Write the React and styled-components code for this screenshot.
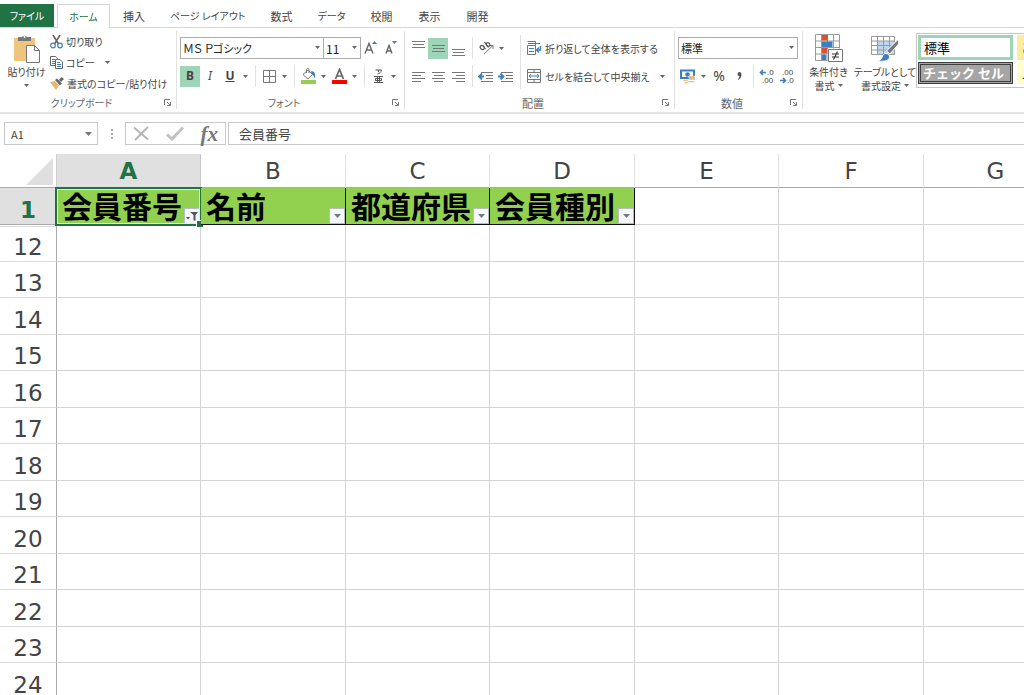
import React, { useState } from "react";
import styled, { createGlobalStyle, css } from "styled-components";

const GlobalStyle = createGlobalStyle`
  * {
    box-sizing: border-box;
  }
  body {
    margin: 0;
    background: #fff;
  }
  body,
  button,
  input,
  select {
    font-family: "Noto Sans CJK JP", "Noto Sans", sans-serif;
    font-size: 12px;
    font-feature-settings: "palt";
    color: #444;
  }
`;

// ---------------- layout ----------------
const Page = styled.div`
  display: flex;
  flex-direction: column;
  height: 100vh;
  overflow: hidden;
`;
const TabBar = styled.nav`
  display: flex;
  align-items: flex-end;
  height: 28px;
  flex-shrink: 0;
  border-bottom: 1px solid #d8d8d8;
`;
const Tab = styled.button`
  height: 23px;
  padding: 0 ${(props) => (props.$kana ? 12 : 13)}px;
  border: 0;
  background: none;
  font-size: ${(props) => (props.$kana ? 10 : 11)}px;
  line-height: 22px;
  white-space: nowrap;
  ${(props) =>
    props.$file &&
    css`
      width: 54px;
      padding: 0;
      margin-right: 3px;
      background: #217346;
      color: #fff;
    `}
  ${(props) =>
    props.$active &&
    css`
      width: 53px;
      height: 24px;
      padding: 0;
      margin-bottom: -1px;
      border: 1px solid #d4d4d4;
      border-bottom: 0;
      background: #fff;
      color: #217346;
    `}
`;
const Ribbon = styled.div`
  display: flex;
  flex-shrink: 0;
  height: 86px;
  padding-top: 3px;
  border-bottom: 2px solid #e4e4e4;
  overflow: hidden;
`;
const Group = styled.section`
  display: flex;
  flex-direction: column;
  flex: 0 0 ${(props) => props.$width}px;
  min-width: 0;
  height: 78px;
  padding-left: 3px;
  border-right: 1px solid #e1e1e1;
`;
const GroupBody = styled.div`
  display: flex;
  flex: 1;
`;
const GroupFooter = styled.div`
  display: grid;
  grid-template-columns: 12px 1fr 12px;
  align-items: center;
  height: 12px;
  font-size: ${(props) => (props.$kana ? 10 : 11)}px;
  line-height: 12px;
  color: #666;
  text-align: center;
`;
const FooterText = styled.span`
  padding-right: 16px;
`;
const Launcher = styled.button`
  display: flex;
  grid-column: 3;
  width: 9px;
  height: 8px;
  padding: 0;
  border: 0;
  background: none;
`;
const Rows = styled.div`
  display: flex;
  flex-direction: column;
  gap: 6px;
  padding-top: 6px;
`;
const Row = styled.div`
  display: flex;
  align-items: center;
  height: 22px;
`;
const Divider = styled.span`
  align-self: stretch;
  flex-shrink: 0;
  width: 1px;
  margin: 0 3px 0 4px;
  background: #e1e1e1;
`;
const TallDivider = styled(Divider)`
  margin: 4px 6px 8px 4px;
`;

// ---------------- controls ----------------
const ToolButton = styled.button`
  display: flex;
  align-items: center;
  justify-content: center;
  flex-shrink: 0;
  width: 20px;
  height: 21px;
  padding: 0;
  border: 0;
  background: ${(props) => (props.$on ? "#9fd5b7" : "none")};
  font-family: "Noto Sans", sans-serif;
  font-size: ${(props) => props.$size || 12}px;
  line-height: 16px;
`;
const ArrowButton = styled(ToolButton)`
  width: 11px;
`;
const BigButton = styled.button`
  display: flex;
  flex-direction: column;
  align-items: center;
  flex: 0 0 ${(props) => props.$width}px;
  min-width: 0;
  padding: 3px 0 0;
  border: 0;
  background: none;
  font-size: 10px;
  line-height: 13px;
  white-space: nowrap;
  svg {
    flex-shrink: 0;
  }
`;
const BigIcon = styled.span`
  display: flex;
  height: 31px;
`;
const ArrowLine = styled.span`
  display: flex;
  align-items: center;
  gap: 3px;
  height: 14px;
`;
const MenuList = styled.div`
  display: flex;
  flex-direction: column;
`;
const TextButton = styled.button`
  display: flex;
  align-items: center;
  gap: 3px;
  height: ${(props) => props.$height || 21}px;
  padding: 0;
  border: 0;
  background: none;
  font-size: 10px;
  white-space: nowrap;
  svg {
    flex-shrink: 0;
  }
`;
const Spacer = styled.span`
  width: 4px;
`;
const SelectBox = styled.span`
  position: relative;
  width: ${(props) => props.$width}px;
  height: 22px;
  & + & {
    margin-left: -1px;
  }
  select {
    width: 100%;
    height: 100%;
    padding: 0 12px 0 2px;
    border: 1px solid #ababab;
    border-radius: 0;
    background: #fff;
    color: #222;
    font-size: ${(props) => props.$size || 11}px;
    appearance: none;
  }
  svg {
    position: absolute;
    right: 4px;
    top: 9px;
    pointer-events: none;
  }
`;
const Gallery = styled.div`
  display: grid;
  grid-template-columns: 95px 95px;
  grid-template-rows: 25px 22px;
  gap: 2px 4px;
  align-self: flex-start;
  height: 55px;
  margin-top: 2px;
  padding: 1px;
  border: 1px solid #c6c6c6;
`;
const StyleSwatch = styled.button`
  padding: 0 3px;
  border: 1px solid ${(props) => props.$bg};
  background: ${(props) => props.$bg};
  color: ${(props) => props.$fg};
  font-size: 13px;
  line-height: 14px;
  text-align: left;
  white-space: nowrap;
  font-feature-settings: normal;
  ${(props) =>
    props.$selected &&
    css`
      border: 3px solid #9fd5b7;
    `}
  ${(props) =>
    props.$double &&
    css`
      padding: 0 2px;
      border: 3px double #3f3f3f;
      font-weight: 700;
    `}
`;

// ---------------- formula bar ----------------
const FormulaBar = styled.div`
  display: flex;
  flex-shrink: 0;
  height: 40px;
  padding: 8px 0 9px 4px;
`;
const NameBox = styled.div`
  display: flex;
  align-items: center;
  width: 94px;
  height: 23px;
  border: 1px solid #c9c9c9;
  input {
    flex: 1;
    min-width: 0;
    padding: 0 6px;
    border: 0;
    font-size: 11px;
    outline: none;
  }
  button {
    display: flex;
    padding: 0 5px;
    border: 0;
    background: none;
  }
`;
const Dots = styled.span`
  display: flex;
  align-items: center;
  justify-content: center;
  width: 27px;
`;
const EntryButtons = styled.div`
  display: flex;
  align-items: center;
  justify-content: space-between;
  width: 101px;
  height: 23px;
  padding: 0 7px;
  border: 1px solid #c9c9c9;
  button {
    display: flex;
    padding: 0;
    border: 0;
    background: none;
  }
`;
const FxText = styled.span`
  font-family: "Liberation Serif", serif;
  font-size: 21px;
  font-style: italic;
  font-weight: 700;
  line-height: 20px;
  color: #777;
`;
const FormulaInput = styled.input`
  flex: 1;
  min-width: 0;
  height: 23px;
  margin-left: 2px;
  padding: 0 10px;
  border: 1px solid #c9c9c9;
  border-right: 0;
  font-size: 13px;
  font-feature-settings: normal;
  outline: none;
`;

// ---------------- sheet ----------------
const SheetArea = styled.main`
  flex: 1;
  min-height: 0;
  overflow: hidden;
`;
const Sheet = styled.table`
  width: max-content;
  table-layout: fixed;
  border-collapse: separate;
  border-spacing: 0;
  font-family: "DejaVu Sans", sans-serif;
  th,
  td {
    padding: 0;
  }
`;
const HeadRow = styled.tr`
  height: 34px;
`;
const BodyRow = styled.tr`
  height: 36px;
  &:nth-child(odd),
  &:nth-child(2) {
    height: 37px;
  }
`;
const Col = styled.col`
  width: ${(props) => props.$width}px;
`;
const Corner = styled.th`
  border-right: 1px solid #d0d0d0;
  border-bottom: 1px solid #ababab;
  svg {
    display: block;
    margin: 2px 3px 0 auto;
  }
`;
const ColHead = styled.th`
  border-right: 1px solid ${(props) => (props.$on ? "#c6c6c6" : "#e2e2e2")};
  border-bottom: 1px solid #ababab;
  background: ${(props) => (props.$on ? "#e0e0e0" : "#fff")};
  color: ${(props) => (props.$on ? "#217346" : "#444")};
  font-size: 23px;
  font-weight: ${(props) => (props.$on ? 700 : 400)};
  line-height: 32px;
`;
const RowHead = styled.th`
  border-right: 1px solid #ababab;
  border-bottom: 1px solid ${(props) => (props.$on ? "#ababab" : "#d9d9d9")};
  background: ${(props) => (props.$on ? "#e0e0e0" : "#fff")};
  color: ${(props) => (props.$on ? "#217346" : "#444")};
  font-size: 23px;
  font-weight: ${(props) => (props.$on ? 700 : 400)};
  line-height: 28px;
  vertical-align: bottom;
  ${(props) =>
    props.$afterHidden &&
    css`
      box-shadow: inset 0 1px 0 #fff, inset 0 2px 0 #d9d9d9;
    `}
`;
const Cell = styled.td`
  border-right: 1px solid #d4d4d4;
  border-bottom: 1px solid #d4d4d4;
`;
const TitleCell = styled.td`
  position: relative;
  border-right: 1px solid #111;
  border-bottom: 1px solid #111;
  background: #92d050;
  color: #000;
  font-family: "Noto Sans CJK JP", sans-serif;
  font-size: 30px;
  font-weight: 700;
  font-feature-settings: normal;
`;
const TitleInner = styled.div`
  display: flex;
  align-items: flex-end;
  justify-content: space-between;
  height: 36px;
  padding-left: 5px;
  line-height: 38px;
  white-space: nowrap;
`;
const FilterButton = styled.button`
  display: flex;
  align-items: center;
  justify-content: center;
  width: 16px;
  height: 16px;
  padding: 0;
  border: 1px solid #b8bcc4;
  background: #f6f7fb;
`;
const Selection = styled.span`
  position: absolute;
  inset: -1px -2px -2px -2px;
  border: 2px solid #217346;
  box-shadow: inset 0 0 0 1px #e4f3d3;
  pointer-events: none;
  &::after {
    content: "";
    position: absolute;
    right: -3px;
    bottom: -3px;
    width: 6px;
    height: 6px;
    border: 1px solid #fff;
    border-width: 1px 0 0 1px;
    background: #217346;
  }
`;

// ---------------- icons ----------------
const Caret = ({ color = "#666" }) => (
  <svg width="5" height="3" viewBox="0 0 5 3">
    <path d="M0 0h5L2.5 3z" fill={color} />
  </svg>
);
const WideCaret = () => (
  <svg width="7" height="4" viewBox="0 0 7 4">
    <path d="M0 0h7L3.500 4z" fill="#777" />
  </svg>
);
const LauncherIcon = () => (
  <svg width="8" height="8" viewBox="0 0 8 8" fill="none" stroke="#777">
    <path d="M.5 6V.5H6M3 3l3 3M6.500 3v3.500H3" />
  </svg>
);
const PasteIcon = () => (
  <svg width="28" height="29" viewBox="0 0 28 29">
    <path d="M1 4h21v23H1z" fill="#edc57f" />
    <path d="M5 7V3h4a3 3 0 0 1 5 0h4v4z" fill="#777" />
    <circle cx="11.500" cy="3" r="1" fill="#fff" />
    <path d="M13.500 11.500h8l5 5v12h-13z" fill="#fff" stroke="#777" />
    <path d="M21.500 11.500v5h5" fill="none" stroke="#777" />
  </svg>
);
const CutIcon = () => (
  <svg width="13" height="14" viewBox="0 0 13 14" fill="none">
    <path d="M3 0l5.500 9M10 0L4.500 9" stroke="#666" strokeWidth="1.600" />
    <circle cx="3" cy="10.500" r="2.300" stroke="#3d7ebf" strokeWidth="1.200" />
    <circle cx="10" cy="10.500" r="2.300" stroke="#3d7ebf" strokeWidth="1.200" />
  </svg>
);
const CopyIcon = () => (
  <svg width="13" height="13" viewBox="0 0 13 13" fill="#fff" stroke="#666">
    <path d="M.5.5h5l2 2v7h-7z" />
    <path d="M2 3.500h3M2 5.500h3M2 7.500h3" stroke="#3d7ebf" />
    <path d="M5.500 3.500h4.500l2.500 2.500v6.500h-7z" />
    <path d="M7 6.500h3M7 8.500h4M7 10.500h4" stroke="#3d7ebf" />
  </svg>
);
const BrushIcon = () => (
  <svg width="14" height="13" viewBox="0 0 14 13">
    <path d="M0 5l5-1 4 4.500L6 13C4 10 2 8 0 5z" fill="#edb56b" />
    <path d="M5 3l2-1.500 5 5L10 8.500z" fill="#666" />
    <path d="M9 3l2.500-3L14 2l-3 3z" fill="#666" />
  </svg>
);
const GrowIcon = ({ shrink }) => (
  <svg width="14" height="16" viewBox="0 0 14 16">
    <path
      d={shrink ? "M2 13.500L5 5.500l3 8M3 11h4" : "M1 13.500L5 3.500l4 10M2.600 10h4.800"}
      fill="none"
      stroke="#666"
      strokeWidth="1.400"
    />
    <path d={shrink ? "M8 1h5l-2.500 3z" : "M8 4h5l-2.500-3z"} fill="#3d7ebf" />
  </svg>
);
const BorderIcon = () => (
  <svg width="13" height="13" viewBox="0 0 13 13" fill="none" stroke="#777">
    <path d="M.5.5h12v12H.5zM6.500 1v11M1 6.500h11" />
  </svg>
);
const FillIcon = () => (
  <svg width="15" height="16" viewBox="0 0 15 16">
    <path d="M2 6.500L7 2l4.500 4.500L7 11z" fill="#fff" stroke="#777" />
    <path d="M5.500 5V1.500c0-1.500 2.500-1.500 2.500 0V5" fill="none" stroke="#777" />
    <path d="M10 3.500c3-1 5 2 4 7-1-2-1.500-3.500-3-4z" fill="#3d7ebf" />
    <path d="M0 12h15v4H0z" fill="#92d050" />
  </svg>
);
const FontColorIcon = () => (
  <svg width="15" height="16" viewBox="0 0 15 16">
    <path d="M3.500 11l4-9.500 4 9.500M5 8h5" fill="none" stroke="#666" strokeWidth="1.700" />
    <path d="M0 12h15v4H0z" fill="#f00" />
  </svg>
);
const RubyIcon = () => (
  <svg width="9" height="15" viewBox="0 0 9 15" fill="none" stroke="#555">
    <path d="M1.500 1h6c0 2-2 3.500-4 4M4.500 1v2M0 7.500h9M1.500 9.500h6v2h-6zM3.500 7.500v6M5.500 7.500v6M0 13.500h9" />
  </svg>
);
const LinesIcon = ({ lines, accent }) => (
  <svg width="16" height="17" viewBox="0 0 16 17" fill="none">
    {lines.map(([x, y, w]) => (
      <path key={y} d={`M${x} ${y + 0.5}h${w}`} stroke="#777" />
    ))}
    {accent === "out" && (
      <path d="M6 8.500H1M4 5.500l-3 3 3 3" stroke="#3d7ebf" strokeWidth="1.800" />
    )}
    {accent === "in" && (
      <path d="M0 8.500h5M2.500 5.500l3 3-3 3" stroke="#3d7ebf" strokeWidth="1.800" />
    )}
  </svg>
);
const OrientationIcon = () => (
  <svg width="15" height="14" viewBox="0 0 15 14" fill="none" stroke="#555">
    <path d="M5 13L14 4.500M14 8V4.500h-3.500" stroke="#777" />
    <ellipse cx="3.200" cy="6.500" rx="1.800" ry="2.200" transform="rotate(-40 3.200 6.500)" strokeWidth="1.200" />
    <path d="M3.500 4l3 4M5.500 1l4 5.500" strokeWidth="1.200" />
    <ellipse cx="9" cy="3.500" rx="1.700" ry="2" transform="rotate(-40 9 3.500)" strokeWidth="1.200" />
  </svg>
);
const WrapIcon = () => (
  <svg width="15" height="14" viewBox="0 0 15 14" fill="none">
    <path d="M.5 4.500h8v9h-8zM.5.500h8v4" stroke="#777" />
    <path d="M1 2.500h12M2 7.500h5M2 10.500h5" stroke="#3d7ebf" />
    <path d="M13.500 5v4H10M12 6.500l-2.500 2.500 2.500 2.500" stroke="#3d7ebf" strokeWidth="1.400" />
  </svg>
);
const MergeIcon = () => (
  <svg width="15" height="14" viewBox="0 0 15 14" fill="none">
    <path d="M.5.500h13v13H.5zM.5 3.500h13M.5 10.500h13M7 .5v3M7 10.500v3" stroke="#777" />
    <path d="M2 7h10M4 5L2 7l2 2M10 5l2 2-2 2" stroke="#3d7ebf" />
  </svg>
);
const CurrencyIcon = () => (
  <svg width="16" height="15" viewBox="0 0 16 15">
    <path d="M1 1.500h13v7.500H1z" fill="#fff" stroke="#3d7ebf" strokeWidth="2" />
    <circle cx="7.500" cy="5.500" r="2.300" fill="#3d7ebf" />
    <path
      d="M8.500 7h6.500v1.500H8.500zM9 9.500h6.500V11H9zM8 12h6.500v1.500H8zM3 10.500h5V12H3zM4 13h4v1.500H4z"
      fill="#edb56b"
      stroke="#fff"
      strokeWidth=".4"
    />
  </svg>
);
const CommaIcon = () => (
  <svg width="5" height="9" viewBox="0 0 5 9">
    <path d="M.5 2a2 2 0 0 1 4 0c0 3-1 4.500-3 6l-.5-.7C2 6 2.300 5 2.300 4 1 4 .5 3 .5 2z" fill="#555" />
  </svg>
);
const DecimalIcon = ({ more }) => (
  <svg width="16" height="15" viewBox="0 0 16 15" fontFamily="Liberation Sans, sans-serif" fontSize="8">
    <text x={more ? 8 : 3} y="6" fill="#444">
      {more ? ".0" : ".00"}
    </text>
    <text x={more ? 3 : 8} y="14" fill="#444">
      {more ? ".00" : ".0"}
    </text>
    <path
      d={more ? "M7 3.500H1.500M4 1L1.500 3.500 4 6" : "M1 11.500h5.500M4 9l2.500 2.500L4 14"}
      fill="none"
      stroke="#3d7ebf"
      strokeWidth="1.600"
    />
  </svg>
);
const ConditionalIcon = () => (
  <svg width="28" height="28" viewBox="0 0 28 28">
    <path d="M.5.500h24v26H.5z" fill="#fff" />
    <path
      d="M.5.500h24v26H.5zM.5 7h24M.5 13.500h24M.5 20h24M6.500 .5v26M12.500.5v26M18.500.5v26"
      fill="none"
      stroke="#9a9a9a"
    />
    <path d="M7 1h6v5.500H7z" fill="#d9532c" />
    <path d="M7 7.500h10.500v5.500H7zM7 20.500h4.500v5.500H7z" fill="#3d7ebf" />
    <path d="M7 14h6v5.500H7z" fill="#d9532c" />
    <path d="M12.500 14.500h16v14h-16z" fill="#fff" />
    <path d="M13.500 15.500h14v12h-14z" fill="#fff" stroke="#777" />
    <path d="M17 20h7M17 23h7M22.500 17.500l-4 8" fill="none" stroke="#333" strokeWidth="1.200" />
  </svg>
);
const TableFormatIcon = () => (
  <svg width="28" height="28" viewBox="0 0 28 28">
    <path d="M.5 2.500h23v18H.5z" fill="#fff" />
    <path d="M6.500 7h17v13.500h-17z" fill="#bdd7ee" />
    <path
      d="M.5 2.500h23v18H.5zM.5 7h23M.5 11.500h23M.5 16h23M6.500 2.500v18M12.500 2.500v18M18.500 2.500v18"
      fill="none"
      stroke="#9a9a9a"
    />
    <path d="M27.500 5v5L19 20l-3.500-3z" fill="#777" stroke="#fff" />
    <path d="M7 27c3-1 4-3 5-6 2-3 7-1 6.500 2 0 3.500-5.500 5-11.500 4z" fill="#3d7ebf" stroke="#fff" />
  </svg>
);
const CancelIcon = () => (
  <svg width="17" height="15" viewBox="0 0 17 15" fill="none" stroke="#b5b5b5" strokeWidth="2">
    <path d="M1 1.500l14 12M15 1L2 14" />
  </svg>
);
const EnterIcon = () => (
  <svg width="18" height="15" viewBox="0 0 18 15" fill="none" stroke="#c2c2c2" strokeWidth="3">
    <path d="M1 8.500l5 4.500L17 1.500" />
  </svg>
);
const FunnelIcon = () => (
  <svg width="12" height="10" viewBox="0 0 12 10" fill="#555">
    <path d="M4 1h8L9.500 4v5.500h-2V4zM0 6h4L2 8.500z" />
  </svg>
);

const ALIGN_TOP = [
  [2, 1, 13],
  [3, 4, 11],
  [2, 7, 13],
];
const ALIGN_MIDDLE = [
  [2, 5, 13],
  [3, 8, 11],
  [2, 11, 13],
];
const ALIGN_BOTTOM = [
  [2, 9, 13],
  [3, 12, 11],
  [2, 15, 13],
];
const linesFor = (xShort) => [
  [2, 4, 13],
  [xShort, 7, 9],
  [2, 10, 13],
  [xShort, 13, 9],
];
const INDENT = [
  [3, 4, 12],
  [8, 7, 7],
  [8, 10, 7],
  [3, 13, 12],
];

const TABS = [
  { label: "挿入" },
  { label: "ページ レイアウト", kana: true },
  { label: "数式" },
  { label: "データ", kana: true },
  { label: "校閲" },
  { label: "表示" },
  { label: "開発" },
];
const COLUMNS = ["A", "B", "C", "D", "E", "F", "G"];
const TITLES = ["会員番号", "名前", "都道府県", "会員種別"];
const ROWS = [12, 13, 14, 15, 16, 17, 18, 19, 20, 21, 22, 23, 24];

const Footer = ({ label, kana }) => (
  <GroupFooter $kana={kana}>
    <span />
    <FooterText>{label}</FooterText>
    <Launcher aria-label={`${label}の設定`}>
      <LauncherIcon />
    </Launcher>
  </GroupFooter>
);

const Dropdown = ({ label, value, width, size }) => (
  <SelectBox $width={width} $size={size}>
    <select aria-label={label} defaultValue={value}>
      <option>{value}</option>
    </select>
    <Caret />
  </SelectBox>
);

const More = ({ label }) => (
  <ArrowButton aria-label={label}>
    <Caret />
  </ArrowButton>
);

const App = () => {
  const [bold, setBold] = useState(true);
  const [formula, setFormula] = useState("会員番号");

  return (
    <>
      <GlobalStyle />
      <Page>
        <TabBar>
          <Tab $file $kana>
            ファイル
          </Tab>
          <Tab $active $kana>
            ホーム
          </Tab>
          {TABS.map((tab) => (
            <Tab key={tab.label} $kana={tab.kana}>
              {tab.label}
            </Tab>
          ))}
        </TabBar>

        <Ribbon>
          <Group $width={177}>
            <GroupBody>
              <BigButton $width={47}>
                <BigIcon>
                  <PasteIcon />
                </BigIcon>
                <span>貼り付け</span>
                <ArrowLine>
                  <Caret />
                </ArrowLine>
              </BigButton>
              <MenuList>
                <TextButton>
                  <CutIcon />
                  切り取り
                </TextButton>
                <TextButton>
                  <CopyIcon />
                  コピー
                  <Spacer />
                  <Caret />
                </TextButton>
                <TextButton>
                  <BrushIcon />
                  書式のコピー/貼り付け
                </TextButton>
              </MenuList>
            </GroupBody>
            <Footer label="クリップボード" kana />
          </Group>

          <Group $width={228}>
            <GroupBody>
              <Rows>
                <Row>
                  <Dropdown label="フォント" value="ＭＳ Ｐゴシック" width={144} />
                  <Dropdown label="サイズ" value="11" width={38} size={12} />
                  <ToolButton aria-label="拡大">
                    <GrowIcon />
                  </ToolButton>
                  <ToolButton aria-label="縮小">
                    <GrowIcon shrink />
                  </ToolButton>
                </Row>
                <Row>
                  <ToolButton $on={bold} onClick={() => setBold(!bold)}>
                    <b>B</b>
                  </ToolButton>
                  <ToolButton>
                    <i>I</i>
                  </ToolButton>
                  <ToolButton>
                    <b>
                      <u>U</u>
                    </b>
                  </ToolButton>
                  <More label="下線" />
                  <Divider />
                  <ToolButton aria-label="罫線">
                    <BorderIcon />
                  </ToolButton>
                  <More label="罫線の種類" />
                  <Divider />
                  <ToolButton aria-label="塗りつぶし">
                    <FillIcon />
                  </ToolButton>
                  <More label="塗りつぶしの色" />
                  <ToolButton aria-label="文字色">
                    <FontColorIcon />
                  </ToolButton>
                  <More label="文字の色" />
                  <Divider />
                  <ToolButton aria-label="ふりがな">
                    <RubyIcon />
                  </ToolButton>
                  <More label="ふりがなの設定" />
                </Row>
              </Rows>
            </GroupBody>
            <Footer label="フォント" kana />
          </Group>

          <Group $width={270}>
            <GroupBody>
              <Rows>
                <Row>
                  <ToolButton aria-label="上揃え">
                    <LinesIcon lines={ALIGN_TOP} />
                  </ToolButton>
                  <ToolButton $on aria-label="上下中央揃え">
                    <LinesIcon lines={ALIGN_MIDDLE} />
                  </ToolButton>
                  <ToolButton aria-label="下揃え">
                    <LinesIcon lines={ALIGN_BOTTOM} />
                  </ToolButton>
                  <Divider />
                  <ToolButton aria-label="方向">
                    <OrientationIcon />
                  </ToolButton>
                  <More label="方向の種類" />
                </Row>
                <Row>
                  <ToolButton aria-label="左揃え">
                    <LinesIcon lines={linesFor(2)} />
                  </ToolButton>
                  <ToolButton aria-label="中央揃え">
                    <LinesIcon lines={linesFor(4)} />
                  </ToolButton>
                  <ToolButton aria-label="右揃え">
                    <LinesIcon lines={linesFor(6)} />
                  </ToolButton>
                  <Divider />
                  <ToolButton aria-label="インデントを減らす">
                    <LinesIcon lines={INDENT} accent="out" />
                  </ToolButton>
                  <ToolButton aria-label="インデントを増やす">
                    <LinesIcon lines={INDENT} accent="in" />
                  </ToolButton>
                </Row>
              </Rows>
              <TallDivider />
              <Rows>
                <TextButton $height={22}>
                  <WrapIcon />
                  折り返して全体を表示する
                </TextButton>
                <TextButton $height={22}>
                  <MergeIcon />
                  セルを結合して中央揃え
                  <Spacer />
                  <Caret />
                </TextButton>
              </Rows>
            </GroupBody>
            <Footer label="配置" />
          </Group>

          <Group $width={128}>
            <GroupBody>
              <Rows>
                <Row>
                  <Dropdown label="表示形式" value="標準" width={120} />
                </Row>
                <Row>
                  <ToolButton aria-label="通貨">
                    <CurrencyIcon />
                  </ToolButton>
                  <More label="通貨の種類" />
                  <ToolButton $size={14}>%</ToolButton>
                  <ToolButton aria-label="桁区切り">
                    <CommaIcon />
                  </ToolButton>
                  <Divider />
                  <ToolButton aria-label="小数点以下を増やす">
                    <DecimalIcon more />
                  </ToolButton>
                  <ToolButton aria-label="小数点以下を減らす">
                    <DecimalIcon />
                  </ToolButton>
                </Row>
              </Rows>
            </GroupBody>
            <Footer label="数値" />
          </Group>

          <BigButton $width={51}>
            <BigIcon>
              <ConditionalIcon />
            </BigIcon>
            <span>条件付き</span>
            <ArrowLine>
              書式
              <Caret />
            </ArrowLine>
          </BigButton>
          <BigButton $width={62}>
            <BigIcon>
              <TableFormatIcon />
            </BigIcon>
            <span>テーブルとして</span>
            <ArrowLine>
              書式設定
              <Caret />
            </ArrowLine>
          </BigButton>
          <Gallery>
            <StyleSwatch $bg="#fff" $fg="#000" $selected>
              標準
            </StyleSwatch>
            <StyleSwatch $bg="#ffeb9c" $fg="#9c6500">
              どちらでもない
            </StyleSwatch>
            <StyleSwatch $bg="#a5a5a5" $fg="#fff" $double>
              チェック セル
            </StyleSwatch>
            <StyleSwatch $bg="#ffffcc" $fg="#000">
              メモ
            </StyleSwatch>
          </Gallery>
        </Ribbon>

        <FormulaBar>
          <NameBox>
            <input aria-label="名前ボックス" defaultValue="A1" />
            <button aria-label="名前の一覧">
              <WideCaret />
            </button>
          </NameBox>
          <Dots>
            <svg width="2" height="10" viewBox="0 0 2 10" fill="#aaa">
              <path d="M0 0h2v2H0zM0 4h2v2H0zM0 8h2v2H0z" />
            </svg>
          </Dots>
          <EntryButtons>
            <button aria-label="キャンセル">
              <CancelIcon />
            </button>
            <button aria-label="入力">
              <EnterIcon />
            </button>
            <button aria-label="関数の挿入">
              <FxText>fx</FxText>
            </button>
          </EntryButtons>
          <FormulaInput
            aria-label="数式バー"
            value={formula}
            onChange={(e) => setFormula(e.target.value)}
          />
        </FormulaBar>

        <SheetArea>
          <Sheet>
            <colgroup>
              <Col $width={57} />
              {COLUMNS.map((name, i) => (
                <Col key={name} $width={i % 2 ? 145 : 144} />
              ))}
            </colgroup>
            <tbody>
              <HeadRow>
                <Corner aria-label="すべて選択">
                  <svg width="27" height="27" viewBox="0 0 27 27">
                    <path d="M27 0v27H0z" fill="#dfdfdf" />
                  </svg>
                </Corner>
                {COLUMNS.map((name) => (
                  <ColHead key={name} scope="col" $on={name === "A"}>
                    {name}
                  </ColHead>
                ))}
              </HeadRow>
              <BodyRow>
                <RowHead scope="row" $on>
                  1
                </RowHead>
                {TITLES.map((title, i) => (
                  <TitleCell key={title}>
                    <TitleInner>
                      {title}
                      <FilterButton aria-label={`${title}のフィルター`}>
                        {i === 0 ? <FunnelIcon /> : <WideCaret />}
                      </FilterButton>
                    </TitleInner>
                    {i === 0 && <Selection />}
                  </TitleCell>
                ))}
                <Cell />
                <Cell />
                <Cell />
              </BodyRow>
              {ROWS.map((row, i) => (
                <BodyRow key={row}>
                  <RowHead scope="row" $afterHidden={i === 0}>
                    {row}
                  </RowHead>
                  {COLUMNS.map((name) => (
                    <Cell key={name} />
                  ))}
                </BodyRow>
              ))}
            </tbody>
          </Sheet>
        </SheetArea>
      </Page>
    </>
  );
};

export default App;
